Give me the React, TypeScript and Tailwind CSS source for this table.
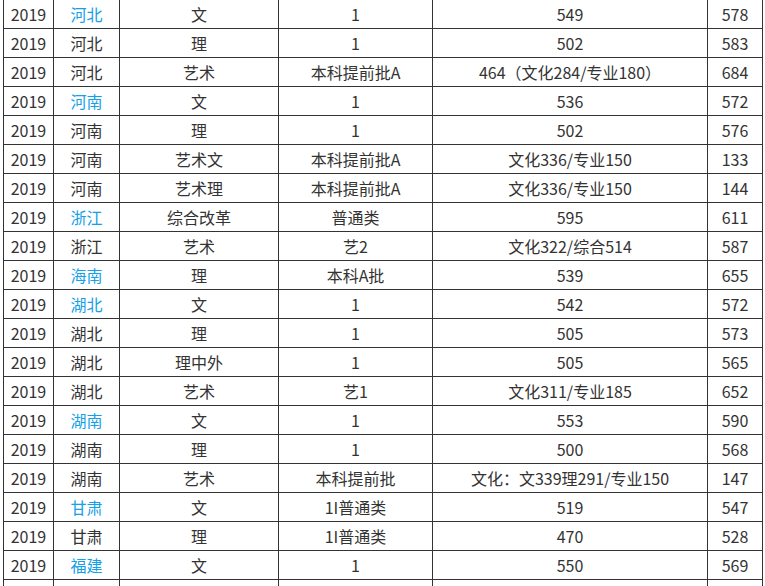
const rows: [string, string, boolean, string, string, string, string][] = [
  ["2019", "河北", true, "文", "1", "549", "578"],
  ["2019", "河北", false, "理", "1", "502", "583"],
  ["2019", "河北", false, "艺术", "本科提前批A", "464（文化284/专业180）", "684"],
  ["2019", "河南", true, "文", "1", "536", "572"],
  ["2019", "河南", false, "理", "1", "502", "576"],
  ["2019", "河南", false, "艺术文", "本科提前批A", "文化336/专业150", "133"],
  ["2019", "河南", false, "艺术理", "本科提前批A", "文化336/专业150", "144"],
  ["2019", "浙江", true, "综合改革", "普通类", "595", "611"],
  ["2019", "浙江", false, "艺术", "艺2", "文化322/综合514", "587"],
  ["2019", "海南", true, "理", "本科A批", "539", "655"],
  ["2019", "湖北", true, "文", "1", "542", "572"],
  ["2019", "湖北", false, "理", "1", "505", "573"],
  ["2019", "湖北", false, "理中外", "1", "505", "565"],
  ["2019", "湖北", false, "艺术", "艺1", "文化311/专业185", "652"],
  ["2019", "湖南", true, "文", "1", "553", "590"],
  ["2019", "湖南", false, "理", "1", "500", "568"],
  ["2019", "湖南", false, "艺术", "本科提前批", "文化：文339理291/专业150", "147"],
  ["2019", "甘肃", true, "文", "1I普通类", "519", "547"],
  ["2019", "甘肃", false, "理", "1I普通类", "470", "528"],
  ["2019", "福建", true, "文", "1", "550", "569"],
];

const cell = "border border-[#333] p-0 text-center align-middle whitespace-nowrap";

export default function App() {
  return (
    <div className="h-[586px] w-[765px] overflow-hidden bg-white">
      <table
        className="ml-[3px] -mt-[30px] table-fixed border-collapse text-[16px] leading-none text-[#333]"
        style={{ fontFamily: '"Noto Sans CJK SC", "Liberation Sans", sans-serif' }}
      >
        <colgroup>
          <col className="w-[50px]" />
          <col className="w-[66px]" />
          <col className="w-[159px]" />
          <col className="w-[154px]" />
          <col className="w-[275px]" />
          <col className="w-[55px]" />
        </colgroup>
        <tbody>
          <tr className="h-[29px]">
            <td className={cell} />
            <td className={cell} />
            <td className={cell} />
            <td className={cell} />
            <td className={cell} />
            <td className={cell} />
          </tr>
          {rows.map((r, i) => (
            <tr key={i} className="h-[29px]">
              <td className={cell}>{r[0]}</td>
              <td className={`${cell} ${r[2] ? "text-[#15a0e8]" : ""}`}>{r[1]}</td>
              <td className={cell}>{r[3]}</td>
              <td className={cell}>{r[4]}</td>
              <td className={cell}>{r[5]}</td>
              <td className={cell}>{r[6]}</td>
            </tr>
          ))}
          <tr className="h-[29px]">
            <td className={cell} />
            <td className={cell} />
            <td className={cell} />
            <td className={cell} />
            <td className={cell} />
            <td className={cell} />
          </tr>
        </tbody>
      </table>
    </div>
  );
}
